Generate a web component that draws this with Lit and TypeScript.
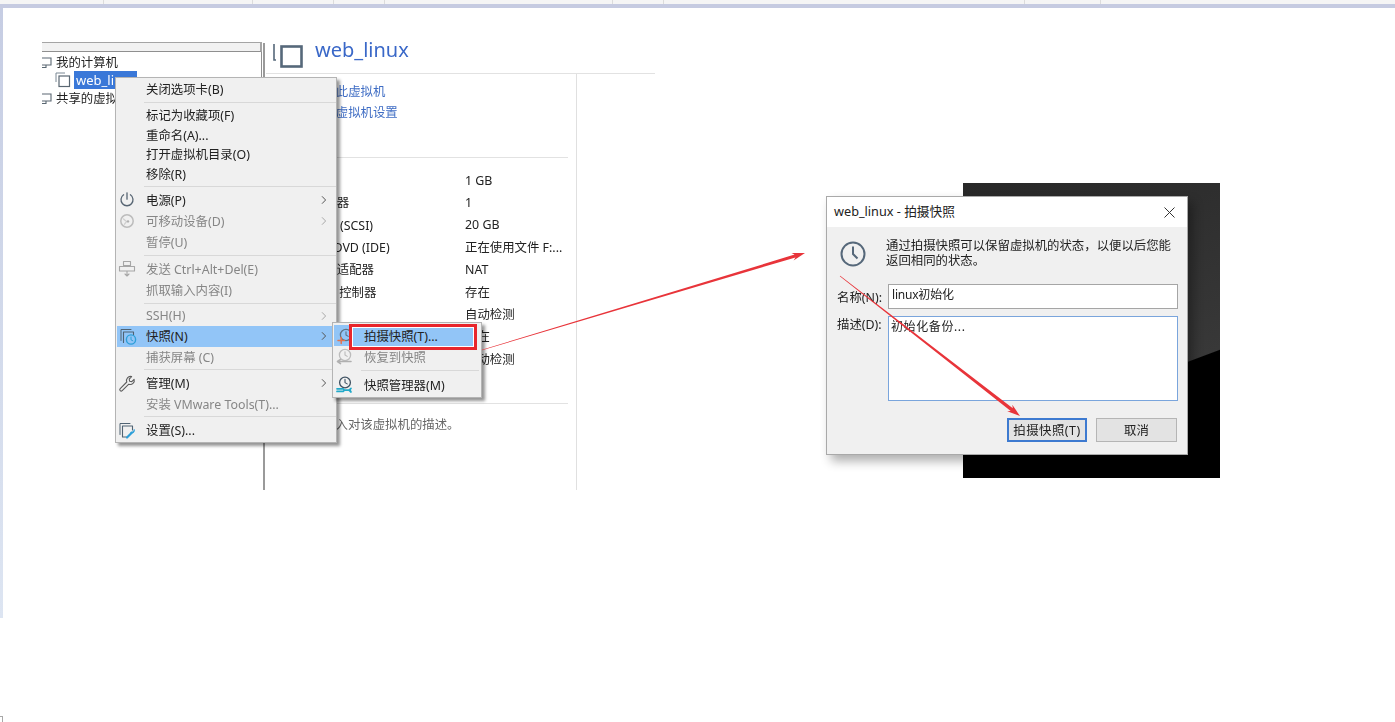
import { LitElement, html, css, svg } from "lit";
import { customElement } from "lit/decorators.js";

type Row = { label: string; icon?: unknown; off?: boolean; more?: boolean; hot?: boolean };

const ico = (body: unknown) => html`<svg class="ic" viewBox="0 0 20 20" fill="none" stroke-linecap="round" stroke-linejoin="round">${body}</svg>`;

const power = ico(svg`<path d="M6.6 4.8a6 6 0 1 0 6.8 0" stroke="#566472" stroke-width="1.3"/><path d="M10 2.8v6.4" stroke="#566472" stroke-width="1.3"/>`);
const disc = ico(svg`<circle cx="10" cy="10" r="6.2" stroke="#bcbcbc" stroke-width="1.5"/><path d="M6.5 8l3 2.6-2 2.6" stroke="#cfcfcf" stroke-width="1.3"/><circle cx="11" cy="10.4" r="1.2" fill="#b0b0b0"/>`);
const send = ico(svg`<path d="M6.5 2.5h7v4h-7zM2.5 7.5h15v4.5h-15zM10 6.5v1M10 12v5M8 15l2 2 2-2" stroke="#a6a6a6" stroke-width="1.1"/>`);
const snap = ico(svg`<path d="M3 14.5V3.5h10" stroke="#4f6272" stroke-width="1"/><path d="M5.5 16.5V6h10v3" stroke="#4f6272" stroke-width="1.1"/><circle cx="13" cy="13.5" r="4.6" stroke="#2d9fd8" stroke-width="1.4"/><path d="M13 11v2.8l1.8 1" stroke="#2d9fd8" stroke-width="1"/>`);
const wrench = ico(svg`<path d="M3.2 15.6l6.6-6.6a4 4 0 0 1 4.8-5.4l-2.4 2.4 .4 2.2 2.2 .4 2.3-2.3a4 4 0 0 1-5.3 4.9l-6.6 6.4a1.4 1.4 0 0 1-2-2z" stroke="#5c5c5c" stroke-width="1.1"/>`);
const gear = ico(svg`<path d="M3 14.5V3.5h10" stroke="#4f6272" stroke-width="1"/><path d="M5.5 17V6h10v4M5.5 17h4" stroke="#4f6272" stroke-width="1.1"/><path d="M10 17.5l5-5" stroke="#2d9fd8" stroke-width="2.2"/><path d="M14 12.5a2.4 2.4 0 0 0 3.2-2.6" stroke="#2d9fd8" stroke-width="1.4"/>`);
const take = ico(svg`<circle cx="11" cy="9" r="5.6" stroke="#5f7283" stroke-width="1.3"/><path d="M11 5.8V9l2.2 1.4" stroke="#5f7283" stroke-width="1.1"/><path d="M3 14.5h6.5M6.2 11.5v6" stroke="#e2734f" stroke-width="1.5"/>`);
const restore = ico(svg`<circle cx="11" cy="8" r="5.6" stroke="#bcbcbc" stroke-width="1.3"/><path d="M11 4.8V8l2.2 1.4" stroke="#bcbcbc" stroke-width="1.1"/><path d="M4 14.5h13M6.5 12.4l-3 2.1 3 2.1" stroke="#b0b0b0" stroke-width="1.6"/>`);
const manager = ico(svg`<circle cx="11" cy="7.5" r="5.4" stroke="#3f5262" stroke-width="1.3"/><path d="M11 4.4v3.2l2.2 1.3" stroke="#3f5262" stroke-width="1.1"/><path d="M3 13.8h6.2l1.2 1.4h6M3 16.4h6.2l1.2-1.2M17 13.4l-2 1.8 2 1.8" stroke="#21a9c9" stroke-width="1.7"/>`);

const sections: { cls: string; rows: Row[] }[] = [
  { cls: "", rows: [{ label: "关闭选项卡(B)" }] },
  { cls: "dense", rows: [{ label: "标记为收藏项(F)" }, { label: "重命名(A)..." }, { label: "打开虚拟机目录(O)" }, { label: "移除(R)" }] },
  { cls: "", rows: [{ label: "电源(P)", icon: power, more: true }, { label: "可移动设备(D)", icon: disc, off: true, more: true }, { label: "暂停(U)", off: true }] },
  { cls: "", rows: [{ label: "发送 Ctrl+Alt+Del(E)", icon: send, off: true }, { label: "抓取输入内容(I)", off: true }] },
  { cls: "mid", rows: [{ label: "SSH(H)", off: true, more: true }, { label: "快照(N)", icon: snap, more: true, hot: true }, { label: "捕获屏幕 (C)", off: true }] },
  { cls: "tight", rows: [{ label: "管理(M)", icon: wrench, more: true }, { label: "安装 VMware Tools(T)...", off: true }] },
  { cls: "", rows: [{ label: "设置(S)...", icon: gear }] },
];

const specs = [
  ["内存", "1 GB"], ["处理器", "1"], ["硬盘 (SCSI)", "20 GB"], ["CD/DVD (IDE)", "正在使用文件 F:..."],
  ["网络适配器", "NAT"], ["USB 控制器", "存在"], ["声卡", "自动检测"], ["打印机", "存在"], ["显示器", "自动检测"],
];

const ticks = [103, 252, 333, 384, 612, 663, 1024, 1100];

function arrow(x0: number, y0: number, x1: number, y1: number, tail: number, neck: number, head: number, wing: number) {
  const len = Math.hypot(x1 - x0, y1 - y0);
  const ux = (x1 - x0) / len, uy = (y1 - y0) / len, nx = -uy, ny = ux;
  const bx = x1 - ux * head, by = y1 - uy * head;
  const nkx = x1 - ux * head * 0.8, nky = y1 - uy * head * 0.8;
  const p = [
    [x0 + nx * tail, y0 + ny * tail],
    [nkx + nx * neck, nky + ny * neck],
    [bx + nx * wing, by + ny * wing],
    [x1, y1],
    [bx - nx * wing, by - ny * wing],
    [nkx - nx * neck, nky - ny * neck],
    [x0 - nx * tail, y0 - ny * tail],
  ];
  return p.map((q) => q.map((v) => v.toFixed(1)).join(",")).join(" ");
}

@customElement("app-root")
export class AppRoot extends LitElement {
  static styles = css`
    :host { display: block; width: 1395px; height: 722px; position: relative; overflow: hidden; background: #fff;
      font-family: "Noto Sans", "Noto Sans CJK SC", sans-serif; font-size: 12.4px; color: #222; }
    .stage { position: absolute; inset: 0; filter: blur(0.4px); }
    .top { height: 4px; background: #f5f5f5; display: flex; position: relative; }
    .tick { position: absolute; top: 0; width: 1px; height: 4px; background: #dcdcdc; }
    .band { height: 4px; background: #c6cbe1; }
    .side { position: absolute; left: 0; top: 8px; width: 3px; height: 610px; background: linear-gradient(#c6cde3, #dde5f2); }
    .corner { position: absolute; left: 0; top: 716px; width: 3px; height: 6px; border-top: 1px solid #a8a8a8; border-right: 1px solid #a8a8a8; box-sizing: border-box; }

    .tree { position: absolute; left: 42px; top: 42px; width: 220px; height: 448px; box-sizing: border-box; }
    .tree-head { height: 8px; background: #f2f2f2; border-top: 1px solid #a5a5a5; border-bottom: 1px solid #8f8f8f; border-right: 2px solid #a5a5a5; }
    .tree-body { height: 30px; padding-top: 1px; border-right: 1px solid #8f8f8f; }
    .tree-row { height: 18px; display: flex; align-items: center; gap: 3px; white-space: nowrap; }
    .tree-row.sub { padding-left: 13px; gap: 3px; }
    .vm { background: #3a78d8; color: #fff; height: 18px; padding: 0 0 0 2px; font-size: 13px; line-height: 18px; }
    .rule { position: absolute; left: 263px; top: 43px; width: 2px; height: 447px; background: #9a9a9a; }

    .detail { position: absolute; left: 266px; top: 36px; width: 389px; height: 454px; }
    .head { height: 37px; border-bottom: 1px solid #e2e2e2; display: flex; align-items: flex-start; gap: 12px; padding-left: 6px; }
    .head svg { margin-top: 8px; }
    .title { font-size: 20px; color: #3a68c8; line-height: 28px; }
    .pane { width: 310px; height: 416px; border-right: 1px solid #e0e0e0; box-sizing: content-box; }
    .links { height: 84px; box-sizing: border-box; width: 302px; padding: 7px 0 0 45px; border-bottom: 1px solid #e2e2e2; color: #3f6dc4; line-height: 21px; }
    .specs { display: grid; grid-template-columns: 153px 1fr; grid-auto-rows: 22.3px; align-items: center; padding: 11px 0 0 46px; height: 246px; width: 302px; border-bottom: 1px solid #e2e2e2; box-sizing: border-box; white-space: nowrap; }
    .note { padding: 11px 0 0 20px; color: #666; line-height: 20px; }

    .menu { position: absolute; box-sizing: border-box; background: #f0f0f0; border: 1px solid #b4b4b4; box-shadow: 3px 3px 3px rgba(0,0,0,.42); }
    .main { left: 115px; top: 77px; width: 222px; height: 366px; padding-top: 0.5px; }
    .sep { height: 1px; margin: 2.5px 0 2.5px 28px; background: #d8d8d8; }
    .row { height: 21px; display: flex; align-items: center; position: relative; padding-left: 30px; white-space: nowrap; }
    .dense .row { height: 19.6px; }
    .mid { margin-top: -1px; }
    .tight { margin-bottom: -1px; }
    .mid .row { height: 20px; }
    .row.off { color: #868686; }
    .row.hot { background: #92c5f7; margin-left: 1px; padding-left: 29px; height: 21px; }
    .ic { position: absolute; left: 1px; top: 50%; width: 20px; height: 20px; transform: translateY(-50%); }
    .chev { position: absolute; right: 9px; top: 50%; width: 6px; height: 9px; transform: translateY(-50%); }
    .sub-menu { left: 332px; top: 322px; width: 150px; height: 76px; padding-top: 2px; }
    .sub-menu .row { padding-left: 31px; height: 21px; }
    .sub-menu .row.off { margin-top: 0.5px; }
    .sub-menu .row.hot { margin-left: 1px; margin-right: 5px; padding-left: 30px; }
    .sub-menu .sep { margin: 2.5px 2px 3px 28px; }
    .sub-menu .last { height: 22px; }
    .mark { position: absolute; left: 349px; top: 324px; width: 128px; height: 26px; box-sizing: border-box; border: 3px solid #e8262c; box-shadow: inset 0 0 0 1px #fff; }

    .back { position: absolute; left: 963px; top: 183px; width: 257px; height: 295px;
      background: linear-gradient(159.4deg, #282828 0, #383838 246px, #000 247px); }
    .dialog { position: absolute; left: 826px; top: 196px; width: 362px; height: 259px; box-sizing: border-box; background: #f0f0f0; border: 1px solid #a9a9a9; box-shadow: 5px 6px 10px rgba(0,0,0,.32); display: flex; flex-direction: column; }
    .bar { height: 30px; flex: none; background: #fff; display: flex; align-items: center; justify-content: space-between; padding: 0 12px 0 7px; font-size: 12.7px; }
    .bar span { margin-top: -3px; }
    .intro { height: 57px; flex: none; box-sizing: border-box; display: flex; padding: 12px 0 0 12px; gap: 19px; line-height: 14.5px; }
    .clock { width: 28px; height: 28px; margin-top: 1px; flex: none; }
    .intro p { margin: 0; width: 290px; }
    .form { display: grid; grid-template-columns: 51px 290px; grid-template-rows: 25px 85px; gap: 7px 0; padding-left: 10px; }
    .lab { line-height: 28px; }
    .lab.d { line-height: 18px; }
    .field { background: #fff; box-sizing: border-box; border: 1px solid #a5a5a5; padding: 1px 3px; line-height: 18px; font-size: 12px; letter-spacing: -.2px; }
    .area { border-color: #7aa5dc; padding: 2px 2px; line-height: 16px; letter-spacing: .6px; }
    .btns { display: flex; justify-content: flex-end; gap: 9px; margin-top: 17px; padding-right: 10px; }
    .btn { width: 81px; height: 24px; box-sizing: border-box; background: #e3e3e3; border: 1px solid #b5b5b5; display: flex; align-items: center; justify-content: center; }
    .btn.def { width: 80px; border: 2px solid #3d7ad0; letter-spacing: .5px; }

    .ink { position: absolute; left: 0; top: 0; width: 1395px; height: 722px; pointer-events: none; }
  `;

  private chev(off?: boolean) {
    return html`<svg class="chev" viewBox="0 0 6 9" fill="none"><path d="M1 .8l3.6 3.7L1 8.2" stroke=${off ? "#a8a8a8" : "#555"} stroke-width="1"/></svg>`;
  }

  private row(r: Row) {
    return html`<div class="row ${r.off ? "off" : ""} ${r.hot ? "hot" : ""}">${r.icon ?? ""}<span>${r.label}</span>${r.more ? this.chev(r.off) : ""}</div>`;
  }

  render() {
    return html`
      <div class="stage">
        <div class="top">${ticks.map((x) => html`<i class="tick" style="left:${x}px"></i>`)}</div>
        <div class="band"></div>
        <div class="side"></div>
        <div class="corner"></div>

        <div class="tree">
          <div class="tree-head"></div>
          <div class="tree-body">
            <div class="tree-row"><svg width="11" height="13" viewBox="0 0 11 13" fill="none"><path d="M0 2h9v7H0M4 9v2.5H0" stroke="#5a6772" stroke-width="1.1"/></svg><span>我的计算机</span></div>
            <div class="tree-row sub"><svg width="16" height="16" viewBox="0 0 16 16" fill="none"><path d="M1 10V1h9" stroke="#7b8894" stroke-width="1"/><rect x="4" y="4" width="10.5" height="10.5" stroke="#5a6772" stroke-width="1.2"/></svg><span class="vm">web_linux</span></div>
            <div class="tree-row"><svg width="11" height="13" viewBox="0 0 11 13" fill="none"><path d="M0 2h9v7H0M4 9v2.5H0" stroke="#5a6772" stroke-width="1.1"/></svg><span>共享的虚拟机</span></div>
          </div>
        </div>
        <div class="rule"></div>

        <div class="detail">
          <div class="head">
            <svg width="31" height="24" viewBox="0 0 31 24" fill="none"><path d="M2 0v16h2" stroke="#56687a" stroke-width="1.6"/><rect x="9.5" y="2.5" width="20" height="20" stroke="#56687a" stroke-width="2.6"/></svg>
            <span class="title">web_linux</span>
          </div>
          <div class="pane">
            <div class="links"><div>开启此虚拟机</div><div>编辑虚拟机设置</div></div>
            <div class="specs">${specs.map(([k, v]) => html`<span>${k}</span><span>${v}</span>`)}</div>
            <div class="note">在此处键入对该虚拟机的描述。</div>
          </div>
        </div>

        <div class="menu main">
          ${sections.map((s, i) => html`${i ? html`<div class="sep"></div>` : ""}<div class=${s.cls}>${s.rows.map((r) => this.row(r))}</div>`)}
        </div>

        <div class="menu sub-menu">
          ${this.row({ label: "拍摄快照(T)...", icon: take, hot: true })}
          ${this.row({ label: "恢复到快照", icon: restore, off: true })}
          <div class="sep"></div>
          <div class="last">${this.row({ label: "快照管理器(M)", icon: manager })}</div>
        </div>
        <div class="mark"></div>

        <div class="back"></div>
        <div class="dialog">
          <div class="bar"><span>web_linux - 拍摄快照</span>
            <svg width="11" height="11" viewBox="0 0 11 11" fill="none"><path d="M.5 .5l10 10M10.5 .5l-10 10" stroke="#333" stroke-width="1"/></svg>
          </div>
          <div class="intro">
            <svg class="clock" viewBox="0 0 28 28" fill="none"><circle cx="14" cy="14" r="11.5" stroke="#56687a" stroke-width="2"/><path d="M14 6.5V14l4.5 4.5" stroke="#56687a" stroke-width="2"/></svg>
            <p>通过拍摄快照可以保留虚拟机的状态，以便以后您能返回相同的状态。</p>
          </div>
          <div class="form">
            <span class="lab">名称(N):</span><div class="field">linux初始化</div>
            <span class="lab d">描述(D):</span><div class="field area">初始化备份...</div>
          </div>
          <div class="btns"><div class="btn def">拍摄快照(T)</div><div class="btn">取消</div></div>
        </div>

        <svg class="ink" viewBox="0 0 1395 722">
          <polygon points=${arrow(482, 350, 805, 253, 0.35, 1.5, 13, 3.8)} fill="#e8343a"/>
          <polygon points=${arrow(840, 276, 1020, 416, 0.35, 1.7, 13, 4.2)} fill="#e8343a"/>
        </svg>
      </div>
    `;
  }
}
